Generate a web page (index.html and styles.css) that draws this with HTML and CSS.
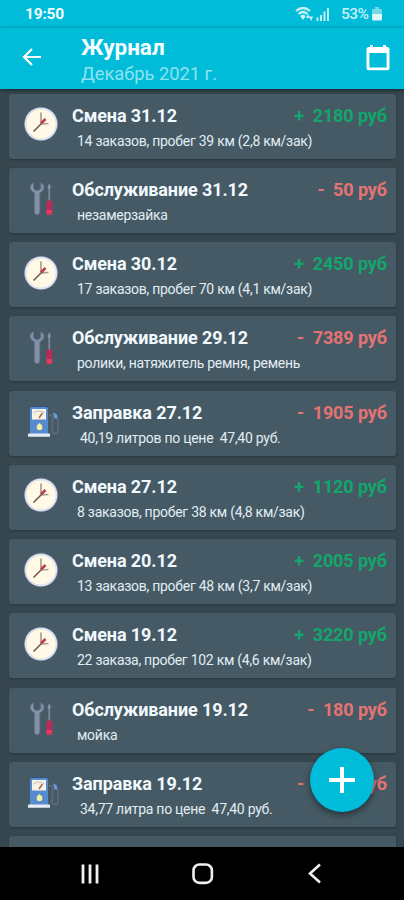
FILE: index.html
```
<!DOCTYPE html>
<html lang="ru">
<head>
<meta charset="utf-8">
<title>Журнал</title>
<link rel="stylesheet" href="styles.css">
</head>
<body>
<svg class="defs" aria-hidden="true">
  <symbol id="clock" viewBox="0 0 40 40">
    <circle cx="20" cy="20" r="17.400" fill="#56617d"/>
    <circle cx="20" cy="20" r="16.500" fill="#dce2ed"/>
    <circle cx="20" cy="20" r="14.600" fill="#fff9e5"/>
    <path d="M20 8.500V19M20.500 20l7-.5" stroke="#a5a294" stroke-width="1.700" fill="none"/>
    <path d="M12.500 27.500L21 19" stroke="#6d5c59" stroke-width="1.600" fill="none"/>
    <path d="M20 19.500l4.500-4.500" stroke="#bd3f4c" stroke-width="2.600" fill="none"/>
  </symbol>
  <symbol id="tools" viewBox="0 0 40 40">
    <path d="M12.500 5C8 6.500 8 12.500 13.400 14.800V34c0 3.300 5.400 3.300 5.400 0V14.800C24.200 12.500 24.200 6.500 19.800 5v5.200l-2.200 2.400h-3l-2.100-2.400z" fill="#8290a8" stroke="#66748b" stroke-width=".8"/>
    <path d="M28.200 5l1.800 4-.9 2.200V23h-1.800V11.200L26.400 9z" fill="#8795a7" stroke="#56657a" stroke-width=".5"/>
    <rect x="25.400" y="22.500" width="5.800" height="14.200" rx="1.800" fill="#b52c5a"/>
    <path d="M25.400 32h5.800v3q0 1.700-1.800 1.700h-2.200q-1.800 0-1.800-1.700z" fill="#e33b60"/>
  </symbol>
  <symbol id="pump" viewBox="0 0 40 40">
    <path d="M28 14c5-1 3 4 3.500 8s-2.500 10 2 10.500 3.600-3.500 3.300-7V17l-2.700-4.500" fill="none" stroke="#5f6d80" stroke-width="1.500"/>
    <path d="M32 11l4 3v3.500h-2.500z" fill="#6c9dde"/>
    <path d="M9 7q0-1.500 1.500-1.500h15q1.500 0 1.500 1.500v26H9z" fill="#568bce"/>
    <path d="M9 6.800q0-1.300 1.500-1.300h15q1.500 0 1.500 1.300" fill="none" stroke="#354e79" stroke-width="1.200"/>
    <rect x="11" y="8" width="14" height="10.500" fill="#f8f2e5"/>
    <path d="M12.500 12q5.500-4 11 0" fill="none" stroke="#c5beb6"/>
    <path d="M18 17l3.500-5" stroke="#a9675d" stroke-width="1.500"/>
    <path d="M18.500 22l2.700 2.500V28q-2.700 2.500-5.400 0v-3.500z" fill="#f5ee9c"/>
    <rect x="7" y="32.500" width="22" height="3.200" rx=".5" fill="#e5ebf4"/>
  </symbol>
</svg>
<div class="screen">
  <div class="status">
    <span class="time">19:50</span>
    <svg class="wifi" viewBox="0 0 19 16">
      <path d="M1 5q7-6 14 0M3.500 8q4.500-4 9 0M6 11q2-2 4 0" fill="none" stroke="currentColor" stroke-width="2.300"/>
      <path d="M8 14l-2-3h4zM11 12l2-4 2 4zM14.200 10.500H18L16.300 15z" fill="currentColor"/>
    </svg>
    <svg class="signal" viewBox="0 0 14 14">
      <path d="M1.500 10.500V14M5 8v6M8.500 4.500V14M12 1v13" stroke="currentColor" stroke-width="1.900"/>
    </svg>
    <span class="percent">53%</span>
    <svg class="battery" viewBox="0 0 10 14">
      <path d="M3 0h4v2h3v6H0V2h3z" fill="#75d8e9"/><path d="M0 7h10v5q0 1.500-1.500 1.500h-7Q0 13.500 0 12z" fill="#e1f8fb"/>
    </svg>
  </div>
  <header class="bar">
    <svg class="back" viewBox="0 0 20 20"><path d="M19 10H3M10 2L2 10l8 8" fill="none" stroke="#fff" stroke-width="2.200"/></svg>
    <div class="heading"><h1>Журнал</h1><p>Декабрь 2021 г.</p></div>
    <svg class="calendar" viewBox="0 0 24 27"><path fill="#fff" fill-rule="evenodd" d="M4 1h3v2h10V1h3v2h1q2.500 0 2.500 2.500v18.300q0 2.500-2.500 2.500H3Q.5 26.300.5 23.800V5.500Q.5 3 3 3h1zM3.400 9v14.400h17.200V9z"/></svg>
  </header>
  <main class="list">
    <article class="card"><svg class="icon"><use href="#clock"/></svg><div class="body"><div class="row"><h2>Смена 31.12</h2><span class="sum plus">+&nbsp; 2180 руб</span></div><p>14 заказов, пробег 39 км (2,8 км/зак)</p></div></article>
    <article class="card"><svg class="icon"><use href="#tools"/></svg><div class="body"><div class="row"><h2>Обслуживание 31.12</h2><span class="sum minus">-&nbsp; 50 руб</span></div><p>незамерзайка</p></div></article>
    <article class="card"><svg class="icon"><use href="#clock"/></svg><div class="body"><div class="row"><h2>Смена 30.12</h2><span class="sum plus">+&nbsp; 2450 руб</span></div><p>17 заказов, пробег 70 км (4,1 км/зак)</p></div></article>
    <article class="card"><svg class="icon"><use href="#tools"/></svg><div class="body"><div class="row"><h2>Обслуживание 29.12</h2><span class="sum minus">-&nbsp; 7389 руб</span></div><p>ролики, натяжитель ремня, ремень</p></div></article>
    <article class="card fuel"><svg class="icon"><use href="#pump"/></svg><div class="body"><div class="row"><h2>Заправка 27.12</h2><span class="sum minus">-&nbsp; 1905 руб</span></div><p>40,19 литров по цене &nbsp;47,40 руб.</p></div></article>
    <article class="card"><svg class="icon"><use href="#clock"/></svg><div class="body"><div class="row"><h2>Смена 27.12</h2><span class="sum plus">+&nbsp; 1120 руб</span></div><p>8 заказов, пробег 38 км (4,8 км/зак)</p></div></article>
    <article class="card"><svg class="icon"><use href="#clock"/></svg><div class="body"><div class="row"><h2>Смена 20.12</h2><span class="sum plus">+&nbsp; 2005 руб</span></div><p>13 заказов, пробег 48 км (3,7 км/зак)</p></div></article>
    <article class="card"><svg class="icon"><use href="#clock"/></svg><div class="body"><div class="row"><h2>Смена 19.12</h2><span class="sum plus">+&nbsp; 3220 руб</span></div><p>22 заказа, пробег 102 км (4,6 км/зак)</p></div></article>
    <article class="card"><svg class="icon"><use href="#tools"/></svg><div class="body"><div class="row"><h2>Обслуживание 19.12</h2><span class="sum minus">-&nbsp; 180 руб</span></div><p>мойка</p></div></article>
    <article class="card fuel"><svg class="icon"><use href="#pump"/></svg><div class="body"><div class="row"><h2>Заправка 19.12</h2><span class="sum minus">-&nbsp; 1648 руб</span></div><p>34,77 литра по цене &nbsp;47,40 руб.</p></div></article>
    <article class="card"></article>
  </main>
  <button class="fab" aria-label="Добавить"><svg viewBox="0 0 28 28"><path d="M14 1v26M1 14h26" stroke="#fff" stroke-width="4"/></svg></button>
  <nav class="nav">
    <svg viewBox="0 0 22 22"><path d="M3 1.500v19M10 1.500v19M17 1.500v19" stroke="#f0f0f0" stroke-width="2.800"/></svg>
    <svg viewBox="0 0 22 22"><rect x="1.500" y="1.500" width="18.400" height="18.400" rx="6" fill="none" stroke="#f0f0f0" stroke-width="2.600"/></svg>
    <svg viewBox="0 0 22 22"><path d="M16 1.500L6 10.500l10 9" fill="none" stroke="#f0f0f0" stroke-width="2.600"/></svg>
  </nav>
</div>
</body>
</html>
```
FILE: styles.css
```
* { box-sizing: border-box; }
body { margin: 0; font-family: Roboto, sans-serif; background: #37474f; }
h1, h2, p { margin: 0; white-space: nowrap; }
svg { display: block; flex: none; }
.defs { position: absolute; width: 0; height: 0; }
.screen { position: relative; width: 404px; height: 900px; display: flex; flex-direction: column; overflow: hidden; }
.status { height: 28px; flex: none; display: flex; align-items: center; padding: 0 22px 0 25px; background: #00bcd9; color: #c3f1f7; }
.time { margin-right: auto; font-size: 15.500px; font-weight: 700; letter-spacing: -.2px; color: #effcfe; }
.wifi { width: 19px; height: 16px; margin-right: 2px; }
.signal { width: 14px; height: 14px; margin-right: 11px; }
.percent { width: 31px; font-size: 15.500px; font-weight: 500; letter-spacing: -.5px; }
.battery { width: 10px; height: 14px; }
.bar { height: 61px; flex: none; display: flex; align-items: flex-start; padding: 0 14px 0 22px; background: #00bcd9; box-shadow: 0 1px 4px rgba(0, 0, 0, .55); z-index: 1; }
.back { width: 20px; height: 20px; margin-top: 19px; }
.heading { margin-left: 39px; flex: 1; }
h1 { font-size: 22.500px; line-height: 27px; margin-top: 6px; font-weight: 700; color: #f4fdff; }
.heading p { font-size: 18.300px; line-height: 24px; margin-top: 1px; color: #8ee3ef; }
.calendar { width: 24px; height: 27px; margin-top: 16px; }
.list { height: 758px; flex: none; overflow: hidden; padding: 4.600px 8px 0 9px; display: flex; flex-direction: column; gap: 9.250px; }
.card { height: 65px; flex: none; display: flex; padding: 0 9px 0 12px; background: #455a64; border-radius: 3px; box-shadow: 0 1px 2px rgba(20, 35, 43, .4); }
.icon { width: 40px; height: 40px; margin-top: 10.500px; }
.body { flex: 1; margin-left: 11px; }
.row { display: flex; justify-content: space-between; align-items: center; height: 24px; margin-top: 10px; }
h2, .sum { font-size: 18px; font-weight: 700; line-height: 24px; letter-spacing: -.1px; white-space: nowrap; }
h2 { color: #f1f9ff; }
.plus { color: #12a66b; }
.minus { color: #e57373; }
.body p { margin: 3px 0 0 5px; font-size: 14px; line-height: 20px; letter-spacing: -.27px; color: #e1edf4; }
.fuel .body p { margin-left: 8px; }
.fab { position: absolute; left: 310px; top: 748px; width: 64px; height: 64px; border: 0; border-radius: 50%; padding: 18px; background: #00bcd9; box-shadow: 0 3px 6px rgba(0, 0, 0, .45); z-index: 2; }
.fab svg { width: 28px; height: 28px; }
.nav { height: 53px; flex: none; display: flex; align-items: center; justify-content: space-between; padding: 0 78px 0 80px; background: #000; }
.nav svg { width: 22px; height: 22px; }
```
